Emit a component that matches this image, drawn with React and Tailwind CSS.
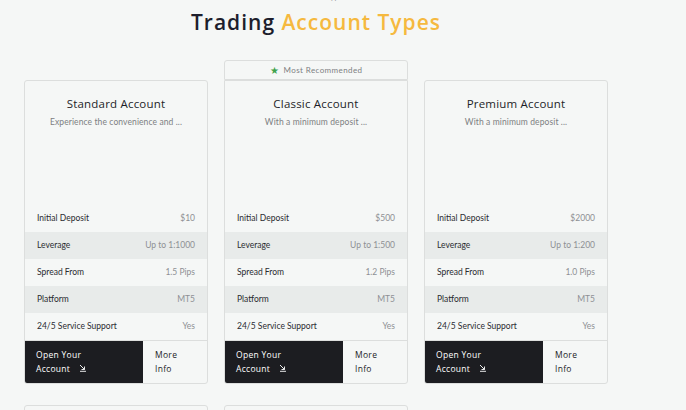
import React from "react";

const cards = [
  {
    title: "Standard Account",
    desc: "Experience the convenience and ...",
    rows: [["Initial Deposit", "$10"], ["Leverage", "Up to 1:1000"], ["Spread From", "1.5 Pips"], ["Platform", "MT5"], ["24/5 Service Support", "Yes"]],
  },
  {
    title: "Classic Account",
    desc: "With a minimum deposit ...",
    rec: true,
    rows: [["Initial Deposit", "$500"], ["Leverage", "Up to 1:500"], ["Spread From", "1.2 Pips"], ["Platform", "MT5"], ["24/5 Service Support", "Yes"]],
  },
  {
    title: "Premium Account",
    desc: "With a minimum deposit ...",
    rows: [["Initial Deposit", "$2000"], ["Leverage", "Up to 1:200"], ["Spread From", "1.0 Pips"], ["Platform", "MT5"], ["24/5 Service Support", "Yes"]],
  },
];

function Arrow() {
  return (
    <svg width="8" height="8" viewBox="0 0 8 8" className="inline-block ml-[6px] -mt-[3px]" fill="none" stroke="white" strokeWidth="0.9">
      <path d="M1 1 L5.5 5.5 M2.5 5.5 H5.5 V2.5 M1 7.3 H7" />
    </svg>
  );
}

function Card({ c }) {
  return (
    <div className="flex flex-col">
      {c.rec ? (
        <div className="h-[20px] border border-[#dcdedd] rounded-t-[3px] flex items-center justify-center gap-[5px] text-[8px] text-[#7d7f82]">
          <span className="text-[#3fa34d] text-[10px] leading-none">★</span>
          <span className="tracking-[0.4px]">Most Recommended</span>
        </div>
      ) : (
        <div className="h-[20px]" />
      )}
      <div className={`border border-[#dcdedd] ${c.rec ? "border-t rounded-b-[3px]" : "rounded-[3px]"} flex flex-col overflow-hidden`}>
        <div className="h-[124px] flex flex-col items-center pt-[14px]">
          <div className="text-[11.5px] font-medium text-[#1d1e28] font-['Open_Sans'] tracking-[0.2px]">{c.title}</div>
          <div className="text-[8.5px] text-[#7d7f82] mt-[4px] tracking-[0.1px]">{c.desc}</div>
        </div>
        {c.rows.map((r, i) => (
          <div key={i} className={`h-[27px] flex items-center justify-between px-[12px] text-[8.5px] ${i % 2 === 1 ? "bg-[#e8ebea]" : ""}`}>
            <span className="text-[#2a2b30]">{r[0]}</span>
            <span className="text-[#8e9094]">{r[1]}</span>
          </div>
        ))}
        <div className="flex h-[43px] border-t border-[#dcdedd]">
          <div className="w-[118px] bg-[#1c1d21] text-white text-[8.5px] leading-[14px] pl-[11px] pt-[7px] font-['Open_Sans'] tracking-[0.3px]">
            <div>Open Your</div>
            <div>Account <Arrow /></div>
          </div>
          <div className="flex-1 text-[#1d1e28] text-[8.5px] leading-[14px] pl-[12px] pt-[7px] font-['Open_Sans'] tracking-[0.3px]">
            <div>More</div>
            <div>Info</div>
          </div>
        </div>
      </div>
    </div>
  );
}

export default function App() {
  return (
    <div className="w-[686px] h-[410px] overflow-hidden bg-[#f5f7f6] font-['Lato',sans-serif]">
      <div className="w-[584px] ml-[24px] flex flex-col items-center">
        <div className="h-[4px] overflow-hidden relative w-full">
          <div className="absolute left-[10px] right-0 -top-[8px] text-center text-[8px] leading-[10px] text-[#9a9c9f]">Account Types</div>
        </div>
        <h1 className="mt-[6px] text-[21px] font-semibold font-['Open_Sans'] tracking-[1px] leading-[24px]">
          <span className="text-[#1d1e2c]">Trading </span>
          <span className="text-[#f5b93f]">Account Types</span>
        </h1>
      </div>
      <div className="w-[584px] ml-[24px] mt-[26px] grid grid-cols-3 gap-x-[16px] gap-y-[1px]">
        {cards.map((c, i) => (
          <Card key={i} c={c} />
        ))}
        <div className="h-[40px] mt-[20px] border border-[#dcdedd] rounded-[3px]" />
        <div className="h-[40px] mt-[20px] border border-[#dcdedd] rounded-[3px]" />
      </div>
    </div>
  );
}
